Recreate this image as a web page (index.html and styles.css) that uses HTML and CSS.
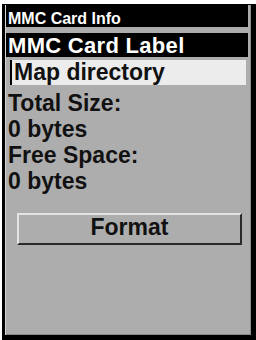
FILE: index.html
```html
<!DOCTYPE html>
<html>
<head>
<meta charset="utf-8">
<link rel="stylesheet" href="styles.css">
</head>
<body>
<div class="screen">
  <div class="title">MMC Card Info</div>
  <div class="label">MMC Card Label</div>
  <div class="dir">Map directory</div>
  <div class="info">
    <div class="line">Total Size:</div>
    <div class="line">0 bytes</div>
    <div class="line">Free Space:</div>
    <div class="line">0 bytes</div>
  </div>
  <div class="btn">Format</div>
</div>
</body>
</html>
```
FILE: styles.css
```css
body {
  margin: 0;
  background: #fff;
  font-family: "Liberation Sans", Arial, sans-serif;
  font-weight: bold;
}
.screen {
  margin: 4px 0 0 2px;
  width: 254px;
  height: 336px;
  box-sizing: border-box;
  border-left: 3px solid #000;
  border-right: 5px solid #000;
  border-bottom: 5px solid #000;
  border-top: 1px solid #000;
  background: #adadad;
  box-shadow: inset 1px 0 #d6d6d6, inset -1px -1px #8a8a8a;
  display: flex;
  flex-direction: column;
  padding: 0 3px 0 1px;
}
.title {
  height: 22px;
  background: #000;
  color: #fff;
  font-size: 16px;
  line-height: 27px;
  padding-left: 2px;
  overflow: hidden;
}
.label {
  margin-top: 6px;
  height: 24px;
  background: #000;
  color: #fff;
  font-size: 22px;
  line-height: 25px;
  padding-left: 2px;
  letter-spacing: 0.3px;
}
.dir {
  margin: 3px 2px 0 4px;
  height: 25px;
  background: #ececec;
  border-left: 2px solid #000;
  color: #111;
  font-size: 23px;
  line-height: 25px;
  padding-left: 2px;
}
.info {
  margin-top: 5px;
  padding-left: 2px;
  color: #111;
  font-size: 23px;
  line-height: 26px;
}
.btn {
  margin: 19px 6px 0 11px;
  height: 32px;
  box-sizing: border-box;
  border: 2px solid;
  border-color: #e4e4e4 #2a2a2a #2a2a2a #e4e4e4;
  color: #111;
  font-size: 23px;
  line-height: 24px;
  text-align: center;
}
```
